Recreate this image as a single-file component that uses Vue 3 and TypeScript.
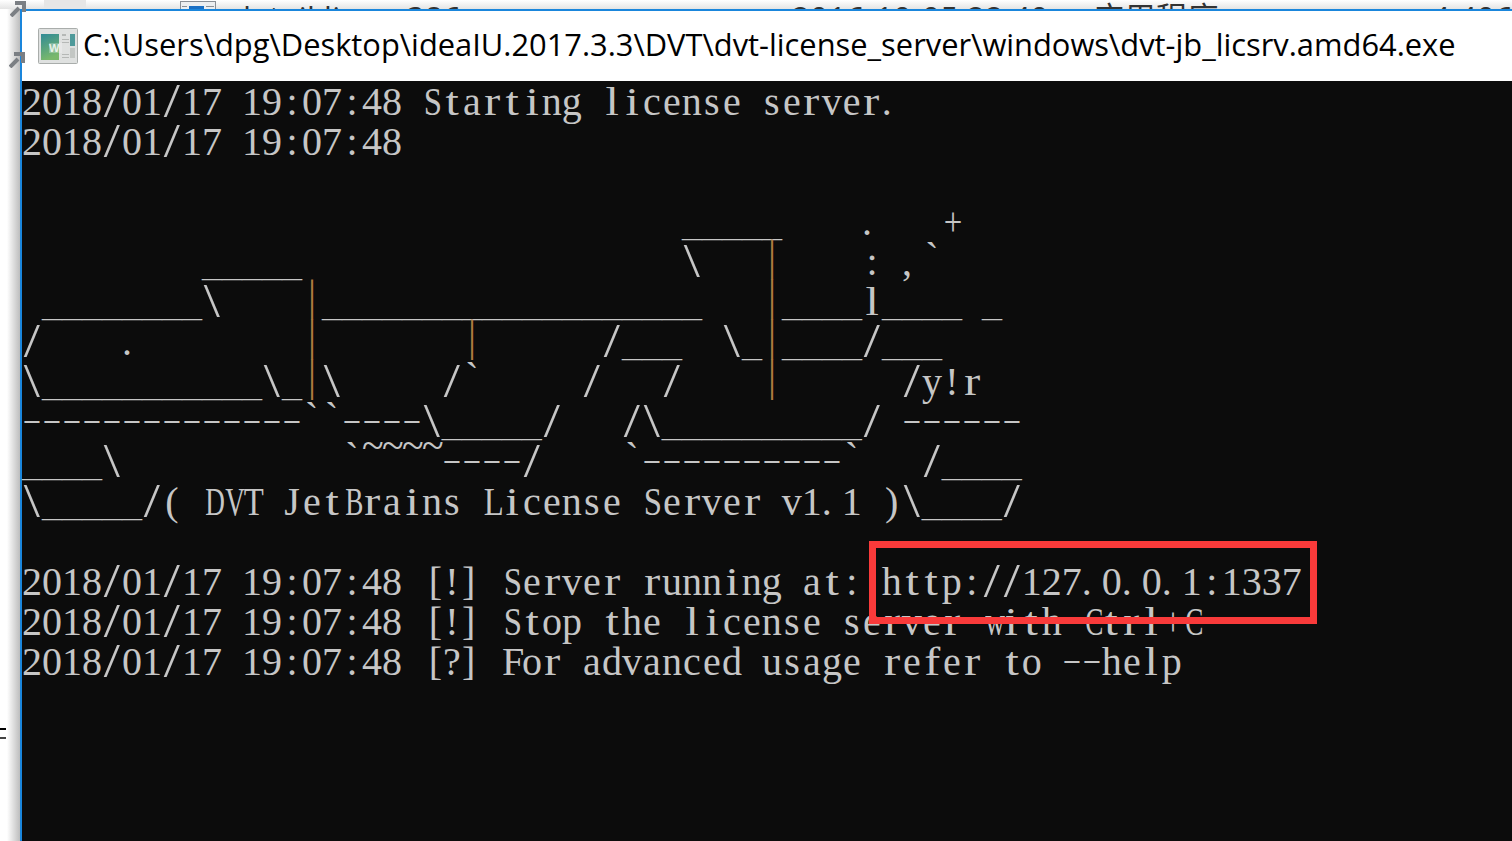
<script setup lang="ts">
type Run = [number, string];

const u = (n: number) => '_'.repeat(n);
const d = (n: number) => '-'.repeat(n);

const stamp = '2018/01/17 19:07:48';
const rowRuns: Run[][] = [
  [[0, stamp + ' Starting license server.']],
  [[0, stamp]],
  [],
  [[33, u(5)], [42, '.'], [46, '+']],
  [[9, u(5)], [33, '\\'], [37, '|'], [42, ':'], [44, ',`']],
  [[1, u(8) + '\\'], [14, '|' + u(19)], [37, '|' + u(4) + 'l' + u(4)], [48, '_']],
  [[0, '/'], [5, '.'], [14, '|'], [22, '|'], [29, '/' + u(3)], [35, '\\_|' + u(4) + '/' + u(3)]],
  [[0, '\\' + u(11) + '\\_|\\'], [21, '/`'], [28, '/'], [32, '/'], [37, '|'], [44, '/y!r']],
  [[0, d(14) + '``' + d(4) + '\\' + u(5) + '/'], [30, '/\\' + u(10) + '/'], [44, d(6)]],
  [[0, u(4) + '\\'], [16, '`~~~~' + d(4) + '/'], [30, '`' + d(10) + '`'], [45, '/' + u(4)]],
  [[0, '\\' + u(5) + '/( DVT JetBrains License Server v1.1 )\\' + u(4) + '/']],
  [],
  [[0, stamp + ' [!] Server running at: http://127.0.0.1:1337']],
  [[0, stamp + ' [!] Stop the license server with Ctrl+C']],
  [[0, stamp + ' [?] For advanced usage refer to --help']],
];

function buildRow(runs: Run[]): string[] {
  const cells: string[] = [];
  for (const [col, text] of runs) {
    while (cells.length < col) cells.push(' ');
    for (const ch of text) cells.push(ch);
  }
  return cells;
}

const rows = rowRuns.map(buildRow);

const classMap: Record<string, string> = {
  '/': 'slash',
  '\\': 'slash',
  '_': 'under',
  '-': 'dash',
  '|': 'pipe',
  '~': 'tilde',
  '`': 'tick',
  '.': 'dot',
  ',': 'dot',
  '[': 'open',
  ']': 'close',
  m: 'wide',
  w: 'wide',
  D: 'wide',
  V: 'wide',
  C: 'wide',
  B: 'wide',
  T: 'mid',
  L: 'mid',
  S: 'mid',
  '+': 'mid',
  i: 'narrow',
  l: 'narrow',
  t: 'narrow',
  r: 'narrow',
  f: 'narrow',
};
const cellClass = (ch: string): string => classMap[ch] ?? '';
</script>

<template>
  <div class="screen">
    <div class="explorer-row">
      <i class="selected-tile"></i>
      <svg class="file-icon" width="36" height="9" viewBox="0 0 36 9">
        <rect x="0.5" y="0.5" width="35" height="12" fill="#eceef0" stroke="#8a8f96" />
        <rect x="9" y="5" width="15" height="6" fill="#1a6fc4" />
        <rect x="26" y="5" width="8" height="1" fill="#8a8f96" />
        <rect x="2" y="5" width="5" height="1" fill="#8a8f96" />
      </svg>
      <span class="file-name">detail.linux-386</span>
      <span class="file-date">2016-10-05 22:40</span>
      <span class="file-type">应用程序</span>
      <span class="file-size">4,406 KB</span>
    </div>

    <div class="desk">
      <div class="gutter">
        <svg class="shortcut top" width="18" height="18" viewBox="0 0 18 18">
          <path d="M1 17 L9 9 M5 4 H14 V13" fill="none" stroke="#7b7f84" stroke-width="4" />
        </svg>
        <svg class="shortcut lower" width="18" height="18" viewBox="0 0 18 18">
          <path d="M1 17 L9 9 M5 4 H14 V13" fill="none" stroke="#7b7f84" stroke-width="4" />
        </svg>
        <i class="tick-a"></i>
        <i class="tick-b"></i>
      </div>

      <section class="window">
        <header class="titlebar">
          <svg class="app-icon" width="40" height="36" viewBox="0 0 40 36">
            <defs>
              <linearGradient id="panel" x1="0" y1="0" x2="0.3" y2="1">
                <stop offset="0" stop-color="#2f8a96" />
                <stop offset="1" stop-color="#79b86c" />
              </linearGradient>
            </defs>
            <rect x="0.5" y="0.5" width="39" height="35" rx="1" fill="#dfe1e0" stroke="#a9adab" />
            <rect x="3" y="6" width="18" height="26" fill="url(#panel)" />
            <rect x="11" y="15" width="13" height="10" fill="#fff" opacity="0.25" />
            <text x="11" y="24" class="icon-letter">W</text>
            <rect x="24" y="6" width="4" height="2" fill="#b5b8b6" />
            <rect x="24" y="11" width="7" height="1" fill="#b5b8b6" />
            <rect x="24" y="14" width="7" height="1" fill="#b5b8b6" />
            <rect x="24" y="26" width="7" height="1" fill="#b5b8b6" />
            <rect x="24" y="29" width="7" height="1" fill="#b5b8b6" />
            <rect x="32" y="6" width="5" height="12" fill="#4f9a9a" />
            <rect x="32" y="20" width="5" height="10" fill="#c3c7c4" />
          </svg>
          <span class="title-text">C:\Users\dpg\Desktop\ideaIU.2017.3.3\DVT\dvt-license_server\windows\dvt-jb_licsrv.amd64.exe</span>
        </header>

        <div class="console">
          <div v-for="(row, r) in rows" :key="r" class="line">
            <span v-for="(ch, c) in row" :key="c" class="cell" :class="cellClass(ch)">{{ ch }}</span>
          </div>
        </div>
      </section>
    </div>

    <div class="highlight"></div>
  </div>
</template>

<style scoped>
.screen {
  position: relative;
  width: 1512px;
  height: 841px;
  overflow: hidden;
  background: #fff;
  display: flex;
  flex-direction: column;
}

.explorer-row {
  height: 9px;
  flex: none;
  display: flex;
  align-items: flex-start;
  overflow: hidden;
  padding-left: 44px;
  background: linear-gradient(#ffffff, #e4e4e4);
  font-family: "Open Sans", "Noto Sans CJK SC", sans-serif;
  font-size: 31px;
  letter-spacing: 0.5px;
  line-height: 34px;
  color: #333;
  white-space: nowrap;
}
.selected-tile {
  width: 42px;
  height: 9px;
  flex: none;
  margin-right: 94px;
  background: #e6e6e6;
}
.file-icon { flex: none; margin-top: 1px; }
.file-name { margin-left: 16px; width: 560px; flex: none; }
.file-date { width: 301px; flex: none; }
.file-type { width: 339px; flex: none; }
.file-size { flex: none; }

.desk {
  flex: 1;
  min-height: 0;
  display: flex;
}

.gutter {
  position: relative;
  width: 20px;
  flex: none;
  background: linear-gradient(90deg, #fff 35%, #bdbdbd 100%);
}
.shortcut { position: absolute; left: 9px; }
.shortcut.top { top: -10px; left: 10px; }
.shortcut.lower { top: 41px; }
.tick-a, .tick-b { position: absolute; left: 0; width: 6px; height: 2px; }
.tick-a { top: 719px; background: #000; }
.tick-b { top: 728px; background: #444; }

.window {
  flex: 1;
  min-width: 0;
  display: flex;
  flex-direction: column;
  border-top: 2px solid #1a86dc;
  border-left: 2px solid #1a86dc;
  background: #0c0c0c;
}

.titlebar {
  height: 70px;
  flex: none;
  display: flex;
  align-items: center;
  background: #fff;
  padding-left: 16px;
  gap: 5px;
}
.app-icon { flex: none; margin-top: -1px; }
.icon-letter {
  font-family: "Liberation Sans", sans-serif;
  font-size: 11px;
  font-weight: 700;
  fill: #e8f2ea;
}
.title-text {
  font-family: "Open Sans", sans-serif;
  font-size: 30.85px;
  line-height: 40px;
  margin-top: -4px;
  color: #000;
  white-space: nowrap;
}

.console {
  flex: 1;
  min-height: 0;
  padding-top: 1px;
  font-family: "Liberation Serif", serif;
  font-size: 40px;
  color: #c6c6c6;
}

.line {
  height: 40px;
  display: flex;
  align-items: flex-start;
}

.cell {
  display: block;
  flex: none;
  width: 20px;
  height: 40px;
  line-height: 40px;
  text-align: center;
  white-space: pre;
  transform-origin: 50% 35px;
}
.slash {
  width: 13.8px;
  margin: 6px 3.1px 0;
  height: 32px;
  line-height: 32px;
  transform-origin: 50% 29.5px;
  transform: scale(1.45, 1.2);
}
.under { transform: scaleY(0.7); transform-origin: 50% 39px; }
.dash {
  width: 13.8px;
  margin: 0 3.1px;
  height: 32px;
  line-height: 32px;
  transform-origin: 50% 19.5px;
  transform: scale(1.45, 0.7);
}
.pipe {
  color: #b07a40;
  height: 36px;
  line-height: 30px;
  transform-origin: 50% 19px;
  transform: scaleY(1.1);
}
.tilde { height: 7px; line-height: 7px; }
.tick { height: 30px; line-height: 30px; }
.dot { text-align: left; }
.open { text-align: right; }
.close { text-align: left; }
.wide { transform: scaleX(0.68); }
.mid { transform: scaleX(0.82); }
.narrow { width: 16.6px; margin: 0 1.7px; transform: scaleX(1.2); }

.highlight {
  position: absolute;
  left: 869px;
  top: 541px;
  width: 448px;
  height: 83px;
  box-sizing: border-box;
  border: 7px solid #f93a3a;
}
</style>

<style>
html, body { margin: 0; overflow: hidden; }
</style>
